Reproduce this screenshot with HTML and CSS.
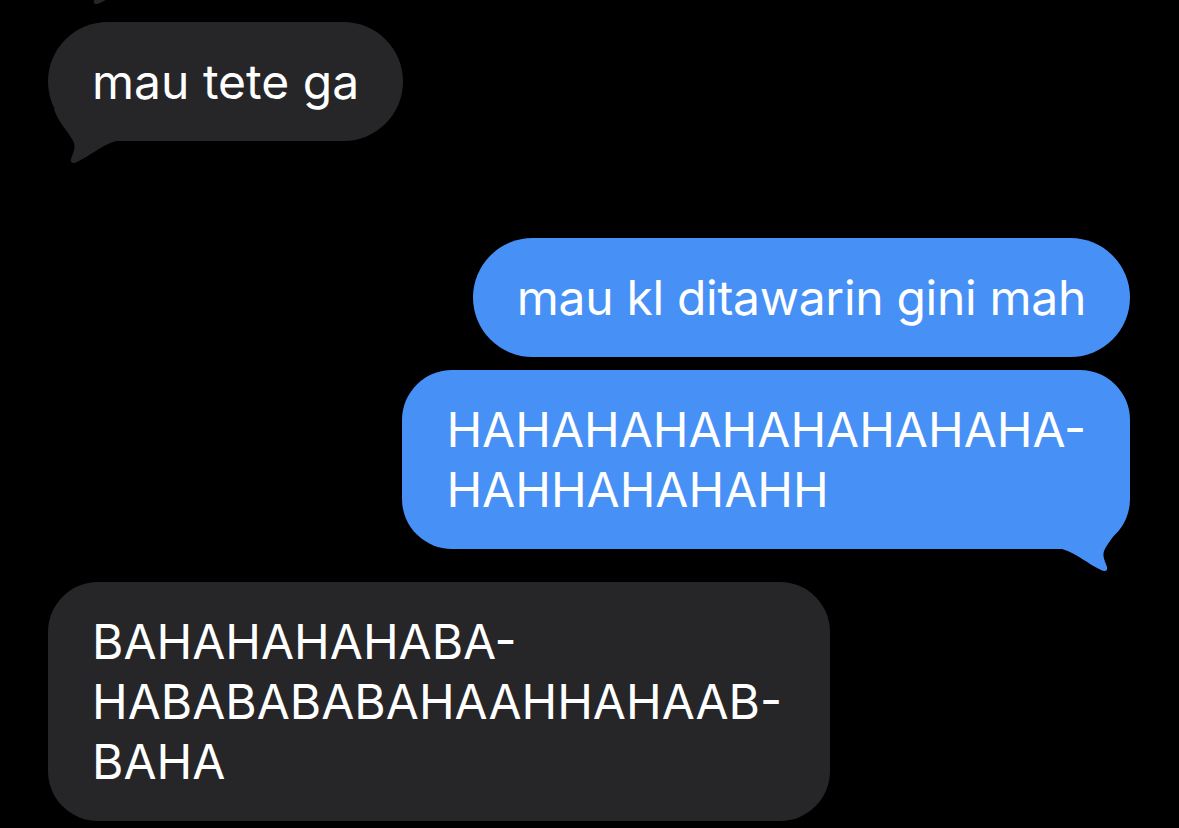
FILE: index.html
```html
<!DOCTYPE html>
<html lang="id">
<head>
<meta charset="utf-8">
<title>Messages</title>
<link rel="stylesheet" href="styles.css">
</head>
<body>
<main class="chat">
  <div class="prev-tail">
    <svg class="tail-svg" width="72" height="58" viewBox="0 0 72 58"><path d="M6,0 C10,14 22,24 26,34 C28,40 24,46 23,50 C22,54 25,55 29,53 C42,47 52,37 68,32 L68,0 Z"/></svg>
  </div>

  <div class="bubble single them first">
    mau tete ga
    <svg class="tail tail-left" width="72" height="58" viewBox="0 0 72 58"><path d="M6,0 C10,14 22,24 26,34 C28,40 24,46 23,50 C22,54 25,55 29,53 C42,47 52,37 68,32 L68,0 Z"/></svg>
  </div>

  <div class="bubble single me gap-group tight">mau kl ditawarin gini mah</div>

  <div class="bubble me gap-same">
    HAHAHAHAHAHAHAHAHA-<br>HAHHAHAHAHH
    <svg class="tail tail-right" width="72" height="58" viewBox="0 0 72 58"><path d="M6,0 C10,14 22,24 26,34 C28,40 24,46 23,50 C22,54 25,55 29,53 C42,47 52,37 68,32 L68,0 Z"/></svg>
  </div>

  <div class="bubble them gap-switch wide">
    BAHAHAHAHABA-<br>HABABABABAHAAHHAHAAB-<br>BAHA
  </div>
</main>
</body>
</html>
```

FILE: styles.css
```css
html, body {
  margin: 0;
  padding: 0;
  background: #000;
}

body {
  font-family: Inter, "Noto Sans", "Liberation Sans", sans-serif;
  -webkit-font-smoothing: antialiased;
}

.chat {
  display: flex;
  flex-direction: column;
  height: 828px;
  box-sizing: border-box;
  padding: 0 49px 0 48px;
  overflow: hidden;
}

.prev-tail {
  height: 5px;
  overflow: hidden;
  align-self: flex-start;
  margin-left: 23px;
}

.prev-tail .tail-svg {
  display: block;
  margin-top: -50px;
  fill: #262629;
}

.bubble {
  position: relative;
  padding: 30px 44px 29px;
  border-radius: 50px;
  font-size: 48px;
  line-height: 60px;
  color: #fff;
  white-space: nowrap;
}

.single {
  border-radius: 60px;
}

.them {
  align-self: flex-start;
  background: #262629;
}

.me {
  align-self: flex-end;
  background: #4791f6;
}

.first { margin-top: 17px; }
.gap-group { margin-top: 97px; }
.gap-same { margin-top: 13px; }
.gap-switch { margin-top: 33px; }

.tight { letter-spacing: -0.3px; }
.wide { padding-right: 48px; }

.tail {
  position: absolute;
  bottom: -26px;
}

.tail-left {
  left: 0;
  fill: #262629;
}

.tail-right {
  right: 0;
  fill: #4791f6;
  transform: scaleX(-1);
}
```
